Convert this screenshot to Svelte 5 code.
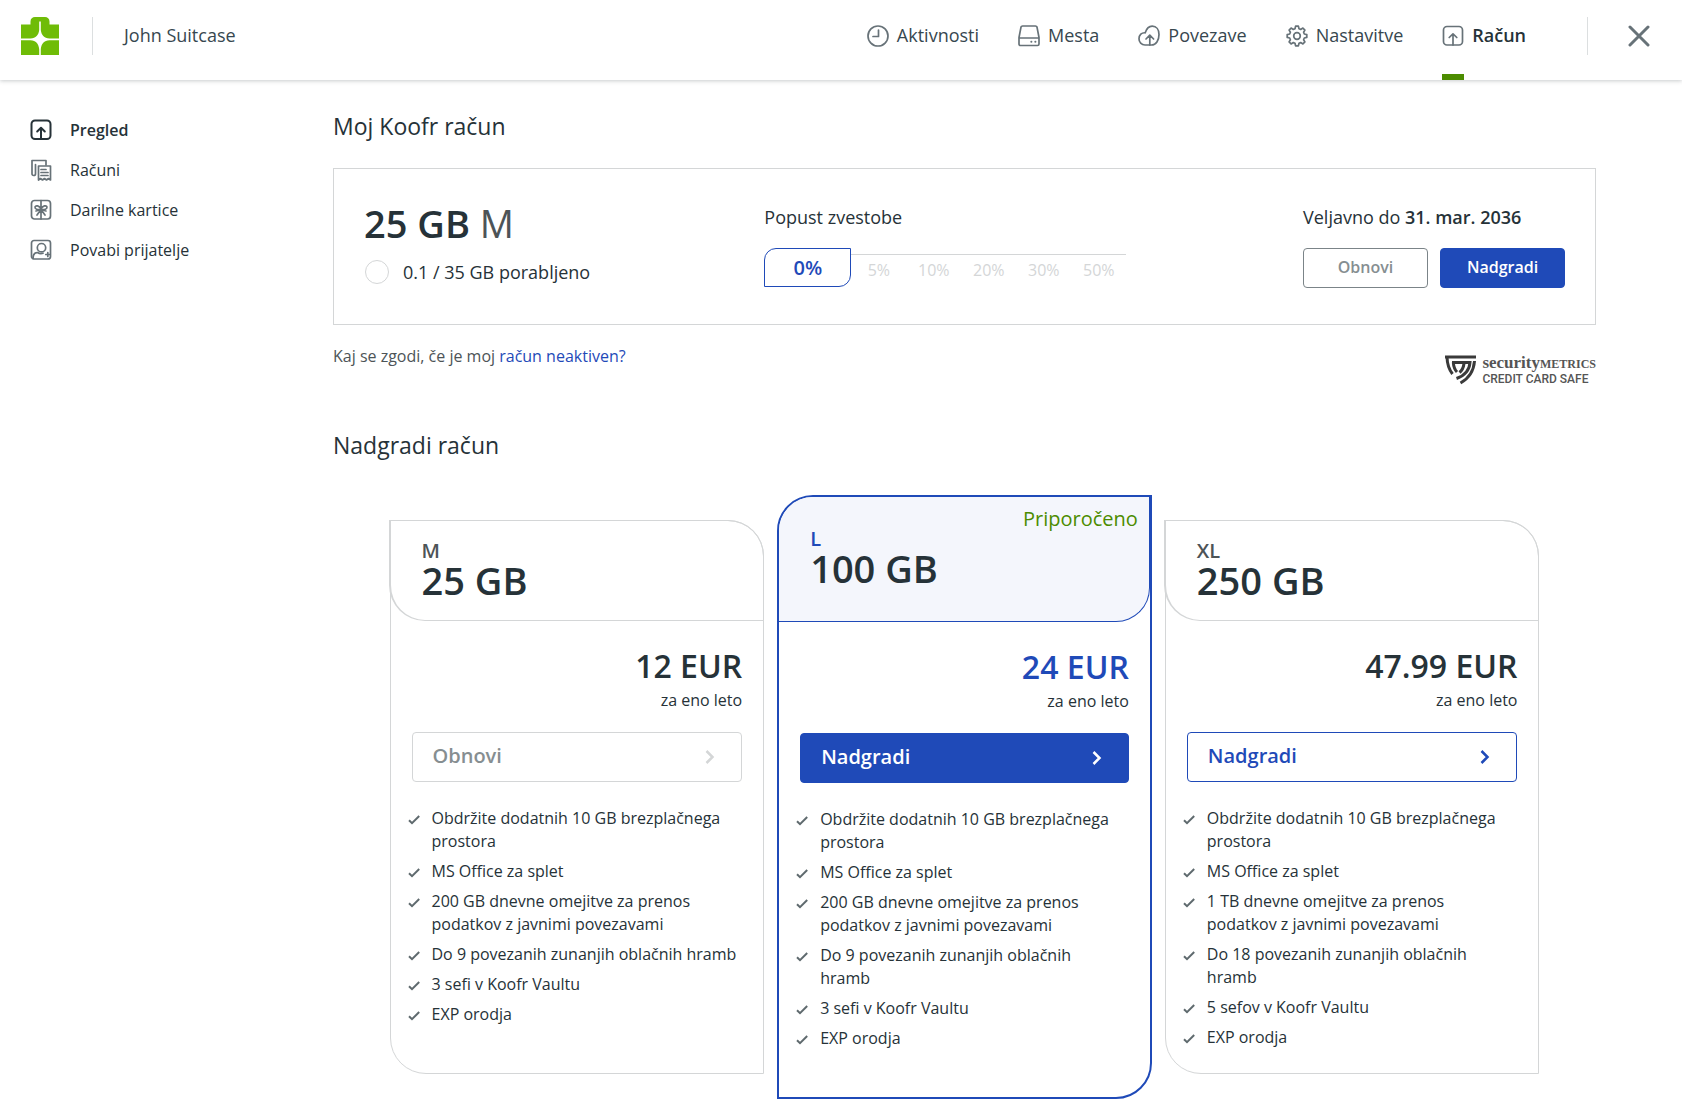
<script lang="ts">
  type Plan = {
    name: string;
    size: string;
    price: string;
    action: string;
    kind: 'renew' | 'recommended' | 'upgrade';
    features: string[];
  };

  const navItems = [
    { id: 'activity', label: 'Aktivnosti' },
    { id: 'places', label: 'Mesta' },
    { id: 'links', label: 'Povezave' },
    { id: 'settings', label: 'Nastavitve' },
    { id: 'account', label: 'Račun' }
  ];

  const sideItems = [
    { id: 'account', label: 'Pregled' },
    { id: 'invoices', label: 'Računi' },
    { id: 'gifts', label: 'Darilne kartice' },
    { id: 'invite', label: 'Povabi prijatelje' }
  ];

  const discounts = ['0%', '5%', '10%', '20%', '30%', '50%'];

  const plans: Plan[] = [
    {
      name: 'M',
      size: '25 GB',
      price: '12 EUR',
      action: 'Obnovi',
      kind: 'renew',
      features: [
        'Obdržite dodatnih 10 GB brezplačnega prostora',
        'MS Office za splet',
        '200 GB dnevne omejitve za prenos podatkov z javnimi povezavami',
        'Do 9 povezanih zunanjih oblačnih hramb',
        '3 sefi v Koofr Vaultu',
        'EXP orodja'
      ]
    },
    {
      name: 'L',
      size: '100 GB',
      price: '24 EUR',
      action: 'Nadgradi',
      kind: 'recommended',
      features: [
        'Obdržite dodatnih 10 GB brezplačnega prostora',
        'MS Office za splet',
        '200 GB dnevne omejitve za prenos podatkov z javnimi povezavami',
        'Do 9 povezanih zunanjih oblačnih hramb',
        '3 sefi v Koofr Vaultu',
        'EXP orodja'
      ]
    },
    {
      name: 'XL',
      size: '250 GB',
      price: '47.99 EUR',
      action: 'Nadgradi',
      kind: 'upgrade',
      features: [
        'Obdržite dodatnih 10 GB brezplačnega prostora',
        'MS Office za splet',
        '1 TB dnevne omejitve za prenos podatkov z javnimi povezavami',
        'Do 18 povezanih zunanjih oblačnih hramb',
        '5 sefov v Koofr Vaultu',
        'EXP orodja'
      ]
    }
  ];

  let activeNav = $state('account');
  let activeSide = $state('account');
</script>

{#snippet icon(id: string)}
  <svg class="icon" viewBox="0 0 22 22" aria-hidden="true">
    {#if id === 'activity'}
      <circle cx="11" cy="11" r="10" />
      <path d="M11.5 5v6.5H6" />
    {:else if id === 'places'}
      <path d="M4.5 1h13c.8 0 1.3.4 1.5 1.1l2 10.4V19c0 1-.6 1.5-1.5 1.5h-17C1.6 20.5 1 20 1 19v-6.5L3 2.1C3.2 1.4 3.7 1 4.5 1zM1 13h20" />
      <path class="dots" d="M13.3 16.8h.1M17.3 16.8h.1" />
    {:else if id === 'links'}
      <path d="M9.5 20H7a6 6 0 0 1-6-6.2c0-4 2.7-6.3 6.2-6C8.5 3.8 11 1.2 14.2 1.2c4.2 0 6.8 3.5 6.8 8.3 0 6-3 10.5-7.5 10.5z" />
      <path d="M11.8 20v-9.5M8 14l3.8-3.8 3.8 3.8" />
    {:else if id === 'settings'}
      <circle cx="11" cy="11" r="3.3" />
      <path d="M9.6 1.2h2.8l.6 2.5 1.7.7 2.2-1.3 2 2-1.3 2.2.7 1.7 2.5.6v2.8l-2.5.6-.7 1.7 1.3 2.2-2 2-2.2-1.3-1.7.7-.6 2.5H9.6L9 18.3l-1.7-.7-2.2 1.3-2-2 1.3-2.2-.7-1.7-2.5-.6V9.6L3.7 9l.7-1.7-1.3-2.2 2-2 2.2 1.3L9 3.7z" />
    {:else if id === 'account'}
      <rect x="1.5" y="1.5" width="19" height="18.5" rx="3.5" />
      <path d="M11 20V9M7.2 12.5L11 8.8l3.8 3.7" />
    {:else if id === 'invoices'}
      <path d="M5.5 5.5v9.2c0 1-.7 1.8-1.8 1.8s-1.7-.8-1.7-1.8V1.5h14V6" />
      <path d="M8.5 7h12v14l-2-1.5-2 1.5-2-1.5-2 1.5-2-1.5-2 1.5zM11 10.5h5M11 13.5h7M11 16.5h7" />
    {:else if id === 'gifts'}
      <rect x="1.5" y="1.5" width="19" height="18.5" rx="3" />
      <path d="M11 1.5V20M11 10C9.5 6.5 5.5 6 5 8c-.4 2 2.5 3 6 2.5M11 10c1.5-3.5 5.5-4 6-2 .4 2-2.5 3-6 2.5M11 10.5L6 12M11 10.5l5 1.5M11 10.5L7 16M11 10.5l4 5.5" />
    {:else if id === 'invite'}
      <rect x="1.5" y="1.5" width="19" height="18.5" rx="2.5" />
      <circle cx="11.5" cy="8.7" r="4.2" />
      <path d="M3 19.5c0-4 2-6 4.5-6 2 1.3 3.5 1.5 5.5.7M15.8 15.5h4M17.8 13.5v4" />
    {/if}
  </svg>
{/snippet}

<header class="topbar">
  <a class="logo" href="#home" aria-label="Koofr">
    <svg viewBox="0 0 38 38" aria-hidden="true">
      <path fill="#6fbc07" d="M0 7.5h9.5v-3C9.5 1.5 11.5 0 14 0h10c2.5 0 4.5 1.5 4.5 4.5v3H38V38H0z" />
      <path fill="#fff" d="M18.2 4.5h1.6V13c.6 5.2 3.2 8 8.7 8.6H38v1.6h-9.5c-5.5.6-8.1 3.4-8.7 8.800v6h-1.600v-6c-.6-5.400-3.200-8.200-8.700-8.800H0v-1.600h9.500c5.500-.6 8.100-3.400 8.700-8.600z" />
    </svg>
  </a>
  <span class="user">John Suitcase</span>
  <nav class="nav" aria-label="Glavni meni">
    {#each navItems as item}
      <a
        href="#{item.id}"
        class="nav-link"
        class:active={activeNav === item.id}
        onclick={() => (activeNav = item.id)}
      >
        {@render icon(item.id)}
        <span>{item.label}</span>
      </a>
    {/each}
  </nav>
  <button class="close" type="button" aria-label="Zapri">
    <svg viewBox="0 0 22 22" aria-hidden="true"><path d="M2 2l18 18M20 2L2 20" /></svg>
  </button>
</header>

<div class="layout">
  <nav class="sidebar" aria-label="Račun">
    {#each sideItems as item}
      <a
        href="#{item.id}"
        class="side-link"
        class:active={activeSide === item.id}
        onclick={() => (activeSide = item.id)}
      >
        {@render icon(item.id)}
        {item.label}
      </a>
    {/each}
  </nav>

  <main class="content">
    <h1>Moj Koofr račun</h1>

    <section class="summary">
      <div>
        <p class="quota"><strong>25 GB</strong> M</p>
        <p class="usage"><span class="usage-ring"></span>0.1 / 35 GB porabljeno</p>
      </div>
      <div>
        <p class="label">Popust zvestobe</p>
        <ol class="discounts">
          {#each discounts as discount, i}
            <li class:current={i === 0}>{discount}</li>
          {/each}
        </ol>
      </div>
      <div class="validity">
        <p class="label">Veljavno do <strong>31. mar. 2036</strong></p>
        <div class="buttons">
          <button class="btn" type="button">Obnovi</button>
          <button class="btn primary" type="button">Nadgradi</button>
        </div>
      </div>
    </section>

    <div class="notes">
      <p>Kaj se zgodi, če je moj <a href="#inactive">račun neaktiven?</a></p>
      <a class="badge" href="#security">
        <svg viewBox="0 0 32 30" aria-hidden="true">
          <path d="M0 2h31M2 2c.2 7 2 12.5 5.5 17M29.5 6c-.8 10.5-5 17-14 22M7 7.5h18c-.5 7-5 13-13.5 16M8.3 7.5c.3 4 1.2 7 3.7 9.5M19 8.5c-.5 4-2 7-4.5 9" />
        </svg>
        <span class="badge-text">
          <span class="badge-name">security<small>METRICS</small></span>
          <span class="badge-note">CREDIT CARD SAFE</span>
        </span>
      </a>
    </div>

    <h2>Nadgradi račun</h2>

    <div class="plans">
      {#each plans as plan}
        <article class="plan {plan.kind}">
          <header class="plan-head">
            {#if plan.kind === 'recommended'}
              <span class="tag">Priporočeno</span>
            {/if}
            <h3>{plan.name}</h3>
            <p>{plan.size}</p>
          </header>
          <div class="plan-body">
            <p class="price">{plan.price}</p>
            <p class="period">za eno leto</p>
            <button class="plan-btn" type="button">
              {plan.action}
              <svg viewBox="0 0 10 16" aria-hidden="true"><path d="M1.5 2l6 6-6 6" /></svg>
            </button>
            <ul>
              {#each plan.features as feature}
                <li>
                  <svg viewBox="0 0 12 10" aria-hidden="true"><path d="M1 5.2l3 3L11.2 1" /></svg>
                  {feature}
                </li>
              {/each}
            </ul>
          </div>
        </article>
      {/each}
    </div>
  </main>
</div>

<style>
  :global(body) {
    font-family: 'Open Sans', sans-serif;
    font-size: 16px;
    line-height: 23px;
    color: #263238;
    background: #fff;
  }

  h1,
  h2,
  h3,
  p,
  ul,
  ol {
    margin: 0;
    padding: 0;
    list-style: none;
  }

  a {
    color: #1f4ab8;
    text-decoration: none;
  }

  button {
    font-family: inherit;
    cursor: pointer;
  }

  strong {
    font-weight: 600;
  }

  .icon {
    width: 22px;
    height: 22px;
    flex: none;
    fill: none;
    stroke: #677278;
    stroke-width: 1.7;
    stroke-linecap: round;
    stroke-linejoin: round;
  }

  .dots {
    stroke-width: 2;
  }

  /* Top bar */
  .topbar {
    display: flex;
    align-items: center;
    height: 80px;
    padding: 0 32px 8px 21px;
    box-sizing: border-box;
    font-size: 18px;
    box-shadow: 0 1px 4px rgba(38, 50, 56, 0.25);
  }

  .logo {
    display: flex;
    padding-right: 33px;
    border-right: 1px solid #dcdfe0;
  }

  .logo svg {
    width: 38px;
    height: 38px;
  }

  .user {
    margin-left: 31px;
    padding-bottom: 2px;
    color: #37474f;
  }

  .nav {
    display: flex;
    align-self: stretch;
    gap: 39px;
    margin: 0 61px 0 auto;
  }

  .nav-link {
    position: relative;
    display: flex;
    align-items: center;
    gap: 8px;
    color: #37474f;
  }

  .nav-link span {
    padding-bottom: 2px;
  }

  .nav-link.active {
    font-weight: 600;
    color: #263238;
  }

  .nav-link.active::after {
    content: '';
    position: absolute;
    left: 0;
    bottom: -8px;
    width: 22px;
    height: 6px;
    background: #4c8c00;
  }

  .close {
    display: flex;
    align-items: center;
    height: 38px;
    padding: 0 0 0 40px;
    border: 0;
    border-left: 1px solid #dcdfe0;
    background: none;
  }

  .close svg {
    width: 22px;
    height: 22px;
    fill: none;
    stroke: #677278;
    stroke-width: 3;
    stroke-linecap: round;
  }

  .layout {
    display: grid;
    grid-template-columns: 303px 1fr;
    padding: 30px 86px 0 30px;
  }

  .sidebar {
    display: flex;
    flex-direction: column;
  }

  .side-link {
    display: flex;
    align-items: center;
    gap: 18px;
    height: 40px;
    color: #263238;
  }

  .side-link.active {
    font-weight: 600;
  }

  .side-link.active .icon {
    stroke: #263238;
    stroke-width: 2;
  }

  h1,
  h2 {
    font-size: 23px;
    line-height: 32px;
    font-weight: 400;
  }

  h2 {
    margin-top: 43px;
  }

  /* Current account */
  .summary {
    display: grid;
    grid-template-columns: repeat(3, 1fr);
    margin-top: 26px;
    padding: 29px 30px 36px;
    border: 1px solid #d4d6d7;
  }

  .quota {
    font-size: 38px;
    line-height: 50px;
    color: #4d5457;
  }

  .quota strong {
    color: #263238;
  }

  .usage {
    display: flex;
    align-items: center;
    gap: 14px;
    margin-top: 12px;
    padding-left: 1px;
    font-size: 18px;
  }

  .usage-ring {
    width: 22px;
    height: 22px;
    border: 1px solid #d4d6d7;
    border-radius: 50%;
  }

  .label {
    margin: 8px 0 19px;
    font-size: 18px;
  }

  .discounts {
    display: flex;
    align-items: flex-start;
  }

  .discounts li {
    width: 55px;
    margin-top: 6px;
    padding-top: 4px;
    border-top: 1px solid #d4d6d7;
    text-align: center;
    color: #d4d6d7;
  }

  .discounts li.current {
    width: 85px;
    margin: 0;
    padding: 0;
    border: 1px solid #1f4ab8;
    border-radius: 12px 0;
    font-size: 20px;
    line-height: 37px;
    font-weight: 600;
    color: #1f4ab8;
  }

  .validity {
    justify-self: end;
  }

  .buttons {
    display: flex;
    gap: 12px;
  }

  .btn {
    width: 125px;
    height: 40px;
    padding: 0 0 2px;
    border: 1px solid #7b8488;
    border-radius: 4px;
    background: #fff;
    font-size: 16px;
    font-weight: 600;
    color: #868e91;
  }

  .btn.primary {
    border-color: #1f4ab8;
    background: #1f4ab8;
    color: #fff;
  }

  .notes {
    display: flex;
    justify-content: space-between;
    align-items: flex-start;
    margin-top: 20px;
    color: #4d5457;
  }

  .badge {
    display: flex;
    gap: 5px;
    margin-top: 10px;
    color: #555;
  }

  .badge svg {
    width: 32px;
    height: 30px;
    fill: none;
    stroke: #3a3a3a;
    stroke-width: 3;
  }

  .badge-text {
    display: flex;
    flex-direction: column;
  }

  .badge-name {
    font-family: 'Liberation Serif', serif;
    font-size: 17px;
    line-height: 15px;
    font-weight: 700;
  }

  .badge-name small {
    font-size: 12px;
  }

  .badge-note {
    font-family: Roboto, sans-serif;
    font-size: 12px;
    line-height: 14px;
    font-weight: 500;
  }

  /* Plans */
  .plans {
    display: grid;
    grid-template-columns: repeat(3, 1fr);
    gap: 13px;
    max-width: 1150px;
    margin: 34px auto 0;
  }

  .plan {
    margin: 25px 0;
    border: 1px solid #d4d6d7;
    border-radius: 0 36px 0 36px;
  }

  .plan-head {
    height: 73px;
    margin: -1px -1px 0 -2px;
    padding: 18px 31px 8px;
    border: 1px solid #d4d6d7;
    border-left-width: 2px;
    border-radius: 0 36px 0 36px;
  }

  .plan-head h3 {
    font-size: 20px;
    line-height: 24px;
    font-weight: 600;
    color: #4d5457;
  }

  .plan-head p {
    font-size: 38px;
    line-height: 34px;
    font-weight: 600;
  }

  .plan-body {
    padding: 23px 21px;
  }

  .price {
    font-size: 32px;
    line-height: 44px;
    font-weight: 600;
    text-align: right;
  }

  .period {
    margin-top: 1px;
    text-align: right;
  }

  .plan-btn {
    display: flex;
    align-items: center;
    justify-content: space-between;
    width: 100%;
    height: 50px;
    margin: 20px 0 25px;
    padding: 0 26px 4px 20px;
    border: 1px solid #1f4ab8;
    border-radius: 4px;
    background: #fff;
    font-size: 20px;
    font-weight: 600;
    color: #1f4ab8;
  }

  .plan-btn svg {
    width: 10px;
    height: 16px;
    margin-top: 4px;
    fill: none;
    stroke: currentColor;
    stroke-width: 2.5;
  }

  .renew .plan-btn {
    border-color: #d4d6d7;
    color: #868e91;
  }

  .renew .plan-btn svg {
    color: #d4d6d7;
  }

  .plan-body ul {
    display: flex;
    flex-direction: column;
    gap: 7px;
  }

  .plan-body li {
    display: flex;
    gap: 12px;
    margin-left: -4px;
  }

  .plan-body li svg {
    width: 12px;
    height: 10px;
    flex: none;
    margin-top: 8px;
    fill: none;
    stroke: #5f6a6e;
    stroke-width: 2;
  }

  .plan.recommended {
    margin: 0;
    border: 2px solid #1f4ab8;
    border-radius: 36px 0;
  }

  .recommended .plan-head {
    position: relative;
    height: 94px;
    margin: 0;
    padding: 30px 31px 0;
    border: 0;
    border-bottom: 1px solid #1f4ab8;
    border-right: 1px solid #1f4ab8;
    border-radius: 34px 0;
    background: #f4f6fc;
  }

  .recommended h3,
  .recommended .price {
    color: #1f4ab8;
  }

  .tag {
    position: absolute;
    top: 9px;
    right: 11px;
    font-size: 20px;
    line-height: 26px;
    color: #4c8c00;
  }

  .recommended .plan-body {
    padding-bottom: 47px;
  }

  .recommended ul {
    padding-right: 10px;
  }

  .recommended .plan-btn {
    background: #1f4ab8;
    color: #fff;
  }
</style>
